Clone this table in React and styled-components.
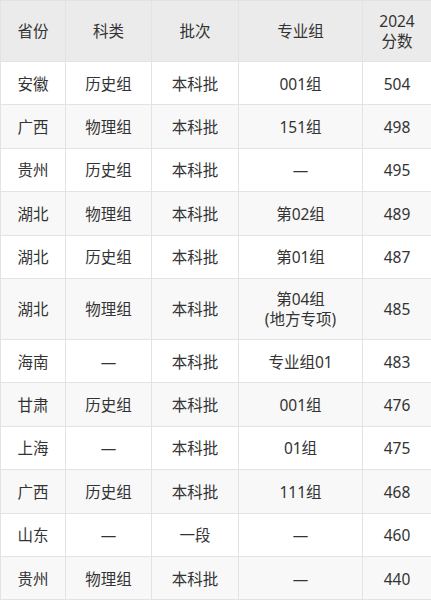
import React from "react";
import styled, { createGlobalStyle } from "styled-components";

const rows = [
  ["安徽", "历史组", "本科批", "001组", "504"],
  ["广西", "物理组", "本科批", "151组", "498"],
  ["贵州", "历史组", "本科批", "—", "495"],
  ["湖北", "物理组", "本科批", "第02组", "489"],
  ["湖北", "历史组", "本科批", "第01组", "487"],
  ["湖北", "物理组", "本科批", ["第04组", "(地方专项)"], "485"],
  ["海南", "—", "本科批", "专业组01", "483"],
  ["甘肃", "历史组", "本科批", "001组", "476"],
  ["上海", "—", "本科批", "01组", "475"],
  ["广西", "历史组", "本科批", "111组", "468"],
  ["山东", "—", "一段", "—", "460"],
  ["贵州", "物理组", "本科批", "—", "440"],
];

const GlobalStyle = createGlobalStyle`
  body {
    margin: 0;
    background: #fff;
    font-family: "Noto Sans", "Noto Sans CJK SC", sans-serif;
    color: #333;
  }
`;

const Table = styled.div`
  width: 431px;
  display: grid;
  grid-template-columns: 65px 86px 87px 124px 69px;
  border-left: 1px solid #e3e3e3;
  border-top: 1px solid #e3e3e3;
  box-sizing: border-box;
`;

const Cell = styled.div`
  box-sizing: border-box;
  height: ${(p) => p.$h}px;
  display: flex;
  flex-direction: column;
  align-items: center;
  justify-content: center;
  text-align: center;
  font-size: 15.5px;
  line-height: 20px;
  color: #333;
  background: ${(p) => (p.$head ? "#ebebeb" : p.$shade ? "#f8f8f8" : "#fff")};
  border-right: 1px solid #e3e3e3;
  border-bottom: 1px solid #e3e3e3;
  padding-top: ${(p) => (p.$head ? 0 : 1)}px;
`;

export default function App() {
  const head = ["省份", "科类", "批次", "专业组", ["2024", "分数"]];
  return (
    <>
      <GlobalStyle />
      <Table>
        {head.map((h, i) => (
          <Cell key={"h" + i} $head $h={61}>
            {Array.isArray(h) ? h.map((t) => <span key={t}>{t}</span>) : h}
          </Cell>
        ))}
        {rows.map((r, ri) =>
          r.map((c, ci) => (
            <Cell
              key={ri + "-" + ci}
              $shade={ri % 2 === 1}
              $h={Array.isArray(r[3]) ? 61 : 43.4}
            >
              {Array.isArray(c) ? c.map((t) => <span key={t}>{t}</span>) : c}
            </Cell>
          ))
        )}
      </Table>
    </>
  );
}
